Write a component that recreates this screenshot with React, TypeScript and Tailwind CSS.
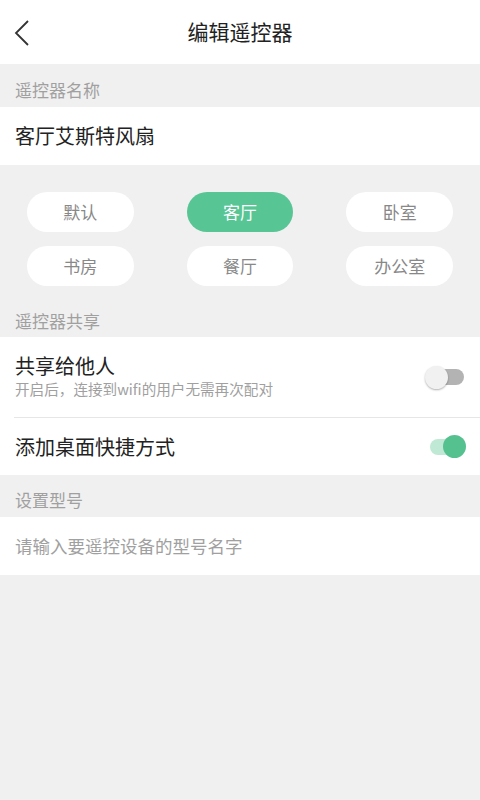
import React from "react";

const font = { fontFamily: '"Noto Sans CJK SC", "Noto Sans", sans-serif' };

function Toggle({ on }: { on: boolean }) {
  return (
    <div className="relative w-[40px] h-[24px] flex items-center">
      <div className={`absolute left-[4px] right-[1px] h-[16px] rounded-full ${on ? "bg-[#bfe9d4]" : "bg-[#b3b3b3]"}`} />
      <div
        className={`absolute w-[23px] h-[23px] rounded-full ${on ? "right-0 bg-[#55c18f]" : "left-0 bg-[#f1f1f1] shadow-[0_1px_2px_rgba(0,0,0,0.3)]"}`}
      />
    </div>
  );
}

export default function App() {
  const chips = ["默认", "客厅", "卧室", "书房", "餐厅", "办公室"];
  return (
    <div className="w-[480px] h-[800px] bg-[#f0f0f0] flex flex-col" style={font}>
      <div className="h-[64px] bg-white relative flex items-center justify-center">
        <svg className="absolute left-[12px] top-[18px]" width="20" height="30" viewBox="0 0 20 30">
          <path d="M16 3 L4 15 L16 27" fill="none" stroke="#333" strokeWidth="1.8" />
        </svg>
        <span className="text-[21px] text-[#222]">编辑遥控器</span>
      </div>
      <div className="h-[43px] flex items-end pb-[5px] px-[15px] text-[17px] text-[#a0a0a0]">遥控器名称</div>
      <div className="h-[58px] bg-white flex items-center px-[15px] text-[20px] text-[#222]">客厅艾斯特风扇</div>
      <div className="grid grid-cols-3 gap-x-[53px] gap-y-[14px] px-[27px] pt-[27px] pb-[19px]">
        {chips.map((c) => (
          <div
            key={c}
            className={`h-[40px] rounded-full flex items-center justify-center text-[17px] ${c === "客厅" ? "bg-[#57c594] text-white" : "bg-white text-[#888]"}`}
          >
            {c}
          </div>
        ))}
      </div>
      <div className="h-[32px] flex items-center px-[15px] text-[17px] text-[#a0a0a0]">遥控器共享</div>
      <div className="bg-white">
        <div className="h-[80px] flex items-center pl-[15px] pr-[15px]">
          <div className="flex-1 flex flex-col pb-[2px]">
            <span className="text-[20px] text-[#222] leading-[25px]">共享给他人</span>
            <span className="text-[14.6px] text-[#a0a0a0] leading-[21px]">开启后，连接到wifi的用户无需再次配对</span>
          </div>
          <Toggle on={false} />
        </div>
        <div className="ml-[14px] h-px bg-[#e6e6e6]" />
        <div className="h-[57px] flex items-center pl-[15px] pr-[14px]">
          <span className="flex-1 text-[20px] text-[#222]">添加桌面快捷方式</span>
          <Toggle on={true} />
        </div>
      </div>
      <div className="h-[42px] flex items-center pt-[8px] px-[15px] text-[17px] text-[#a0a0a0]">设置型号</div>
      <div className="h-[58px] bg-white flex items-center px-[15px] text-[17.5px] text-[#a0a0a0]">请输入要遥控设备的型号名字</div>
    </div>
  );
}
